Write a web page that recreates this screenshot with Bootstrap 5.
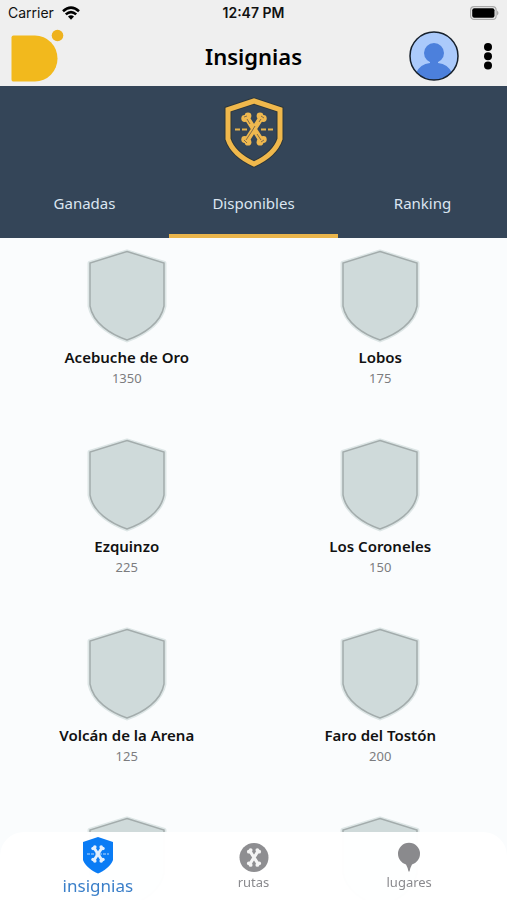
<!DOCTYPE html>
<html lang="es">
<head>
<meta charset="utf-8">
<meta name="viewport" content="width=device-width, initial-scale=1">
<title>Insignias</title>
<link href="https://cdn.jsdelivr.net/npm/bootstrap@5.3.0/dist/css/bootstrap.min.css" rel="stylesheet">
<style>
  body { font-family: "Noto Sans", "Open Sans", sans-serif; background: #fafcfd; color: #111; }
  svg { display: block; flex: none; }
  button { font-family: inherit; }
  .top-area { background: #efefef; }
  .status-bar { height: 26px; padding: 0 8px; font: 14px/26px Inter, sans-serif; }
  .status-bar .clock { font-weight: 600; }
  .title-bar { height: 60px; padding: 0 11px; }
  .screen-title { font-size: 22px; line-height: 32px; font-weight: 600; color: #000; }
  .avatar-btn, .more-btn { background: none; border: 0; padding: 0; }
  .hero { background: #344558; padding-top: 10px; }
  .tab-btn { height: 69px; background: none; border: 0; border-bottom: 4px solid transparent; padding: 4px 0 0; color: #dbe5f1; font-size: 15px; }
  .tab-btn.active { border-color: #eab54b; }
  .badge-list { scrollbar-width: none; padding-top: 10px; }
  .badge-list::-webkit-scrollbar { display: none; }
  .badge-item { height: 189px; }
  .badge-title { font-size: 15px; line-height: 22px; font-weight: 600; padding-top: 2px; }
  .badge-points { font-size: 13px; line-height: 20px; color: #7c7c7f; }
  .bottom-bar { background: rgba(255,255,255,.98); border-radius: 24px 24px 0 0; padding: 4px 20px 0; height: 68px; }
  .bottom-link { color: #8a8a8e; font-size: 13px; line-height: 20px; padding-top: 6px; }
  .bottom-link.active { color: #3a7fc9; font-size: 17px; line-height: 24px; padding-top: 0; }
</style>
<script src="https://cdn.jsdelivr.net/npm/bootstrap@5.3.0/dist/js/bootstrap.bundle.min.js"></script>
</head>
<body class="d-flex flex-column vh-100 overflow-hidden">
<svg width="0" height="0" class="position-absolute" aria-hidden="true">
  <symbol id="shield" viewBox="0 0 80 96">
    <path d="M40 3.500 77.500 15V58C74 75 57 86 40 92.500 23 86 6 75 2.500 58V15Z" fill="#cfdada" stroke="#dde6e6" stroke-width="4" stroke-linejoin="round"/>
    <path d="M40 3.500 77 15V58C74 75 57 86 40 92 23 86 6 75 3 58V15Z" fill="#cfdada" stroke="#a3acac" stroke-width="1.500"/>
  </symbol>
  <symbol id="bones" viewBox="0 0 26 34">
    <path d="M6 6 20 28M20 6 6 28" fill="none" stroke="currentColor" stroke-width="5.500"/>
    <g fill="currentColor"><circle cx="3.700" cy="6.500" r="3.400"/><circle cx="7" cy="3.800" r="3.400"/><circle cx="19" cy="3.800" r="3.400"/><circle cx="22.300" cy="6.500" r="3.400"/><circle cx="3.700" cy="27.500" r="3.400"/><circle cx="7" cy="30.200" r="3.400"/><circle cx="19" cy="30.200" r="3.400"/><circle cx="22.300" cy="27.500" r="3.400"/></g>
  </symbol>
</svg>

<header class="top-area">
  <div class="status-bar row g-0">
    <div class="col d-flex align-items-center gap-2">
      <span>Carrier</span>
      <svg width="18" height="14" viewBox="0 0 18 14" aria-hidden="true"><g fill="none" stroke="#000" stroke-width="2.600"><path d="M1 5.200Q9-2 17 5.200M3.800 8.400Q9 3.700 14.200 8.400"/></g><path d="M6 10.500Q9 7.900 12 10.500L9 13.700Z"/></svg>
    </div>
    <div class="col-auto clock">12:47 PM</div>
    <div class="col d-flex align-items-center justify-content-end">
      <svg width="30" height="14" viewBox="0 0 30 14" aria-hidden="true"><rect x="1.600" y=".6" width="25.500" height="12.800" rx="3.500" fill="none" stroke="#aaa" stroke-width="1.200"/><rect x="3.200" y="2.200" width="22.300" height="9.600" rx="2"/><path d="M28 4.500Q31 7 28 9.500Z" fill="#aaa"/></svg>
    </div>
  </div>
  <div class="title-bar row g-0 align-items-center">
    <div class="col">
      <svg width="54" height="54" viewBox="0 0 54 54" aria-label="Logo" role="img"><path d="M.5 8.500Q.5 6.500 2.500 6.500H24A22.500 23 0 0 1 24 52.500H2Q.5 52.500 .5 50.500Z" fill="#f2b91d"/><circle cx="46.500" cy="6.500" r="5.800" fill="#eeb21e"/></svg>
    </div>
    <h1 class="col-auto screen-title m-0">Insignias</h1>
    <div class="col d-flex justify-content-end align-items-center gap-4">
      <button class="avatar-btn" type="button" aria-label="Perfil">
        <svg width="50" height="50" viewBox="0 0 50 50"><defs><clipPath id="face"><circle cx="25" cy="25" r="24"/></clipPath></defs><circle cx="25" cy="25" r="24" fill="#abcafb"/><g clip-path="url(#face)" fill="#4c80dc"><circle cx="25" cy="22" r="10"/><path d="M21 27H29V32Q39 33 43 42V50H7V42Q11 33 21 32Z"/></g><circle cx="25" cy="25" r="24" fill="none" stroke="#16202c" stroke-width="1.500"/></svg>
      </button>
      <button class="more-btn" type="button" aria-label="Más opciones">
        <svg width="13" height="28" viewBox="0 0 13 28"><circle cx="5" cy="5" r="4"/><circle cx="5" cy="14.200" r="4"/><circle cx="5" cy="23.400" r="4"/></svg>
      </button>
    </div>
  </div>
</header>

<section class="hero">
  <svg class="mx-auto" width="62" height="73" viewBox="0 0 62 73" aria-hidden="true">
    <path d="M31 5 57 13.500V43C53 55 42 63 31 68 20 63 9 55 5 43V13.500Z" fill="none" stroke="#2d3639" stroke-width="7"/>
    <path d="M31 5 57 13.500V43C53 55 42 63 31 68 20 63 9 55 5 43V13.500Z" fill="none" stroke="#f0b84c" stroke-width="5"/>
    <path d="M12 33.500H17M19 33.500H24M38 33.500H43M45 33.500H50" stroke="#e4b24d" stroke-width="1.800"/>
    <use href="#bones" x="18" y="16" width="26" height="34" color="#efb84f"/>
    <path d="M23 44 29 35 32 30M36 26 38 23M24 23 27 28M34 38 38 44M21 21 24 20M38 20 41 22M38 46 41 44M21 44 24 47" fill="none" stroke="#75634a" stroke-width=".9"/>
  </svg>
  <div class="row g-0" role="tablist">
    <button class="col tab-btn" type="button" role="tab" aria-selected="false">Ganadas</button>
    <button class="col tab-btn active" type="button" role="tab" aria-selected="true">Disponibles</button>
    <button class="col tab-btn" type="button" role="tab" aria-selected="false">Ranking</button>
  </div>
</section>

<main class="badge-list flex-fill overflow-auto">
  <div class="row g-0 text-center">
    <div class="col-6 badge-item"><svg class="mx-auto" width="80" height="96"><use href="#shield"/></svg><div class="badge-title">Acebuche de Oro</div><div class="badge-points">1350</div></div>
    <div class="col-6 badge-item"><svg class="mx-auto" width="80" height="96"><use href="#shield"/></svg><div class="badge-title">Lobos</div><div class="badge-points">175</div></div>
    <div class="col-6 badge-item"><svg class="mx-auto" width="80" height="96"><use href="#shield"/></svg><div class="badge-title">Ezquinzo</div><div class="badge-points">225</div></div>
    <div class="col-6 badge-item"><svg class="mx-auto" width="80" height="96"><use href="#shield"/></svg><div class="badge-title">Los Coroneles</div><div class="badge-points">150</div></div>
    <div class="col-6 badge-item"><svg class="mx-auto" width="80" height="96"><use href="#shield"/></svg><div class="badge-title">Volcán de la Arena</div><div class="badge-points">125</div></div>
    <div class="col-6 badge-item"><svg class="mx-auto" width="80" height="96"><use href="#shield"/></svg><div class="badge-title">Faro del Tostón</div><div class="badge-points">200</div></div>
    <div class="col-6 badge-item"><svg class="mx-auto" width="80" height="96"><use href="#shield"/></svg></div>
    <div class="col-6 badge-item"><svg class="mx-auto" width="80" height="96"><use href="#shield"/></svg></div>
  </div>
</main>

<nav class="bottom-bar fixed-bottom">
  <div class="row g-0 text-center">
    <a href="#insignias" class="col bottom-link active text-decoration-none" aria-current="page">
      <svg class="mx-auto" width="32" height="38" viewBox="0 0 32 38" aria-hidden="true"><path d="M16 1 31 6V24C29 30 22 35 16 37.500 10 35 3 30 1 24V6Z" fill="#0a7cf5"/><path d="M5 18H27" stroke="#b9d9fc" stroke-width="1" stroke-dasharray="3 1"/><use href="#bones" x="9" y="9" width="14" height="18" color="#e4f0fd"/></svg>
      insignias
    </a>
    <a href="#rutas" class="col bottom-link text-decoration-none">
      <svg class="mx-auto" width="30" height="30" viewBox="0 0 30 30" aria-hidden="true"><circle cx="15" cy="15.500" r="14.500" fill="#8e8e91"/><use href="#bones" x="7.500" y="6" width="15" height="19" color="#f4f4f4"/></svg>
      rutas
    </a>
    <a href="#lugares" class="col bottom-link text-decoration-none">
      <svg class="mx-auto" width="24" height="30" viewBox="0 0 24 30" aria-hidden="true"><path d="M12 .8A11 11 0 0 1 23 11.800C23 17 19.500 21 15 22.500Q13.500 25 12.500 29.500H11.500Q10.500 25 9 22.500C4.500 21 1 17 1 11.800A11 11 0 0 1 12 .8Z" fill="#8a8a8d"/></svg>
      lugares
    </a>
  </div>
</nav>
</body>
</html>
